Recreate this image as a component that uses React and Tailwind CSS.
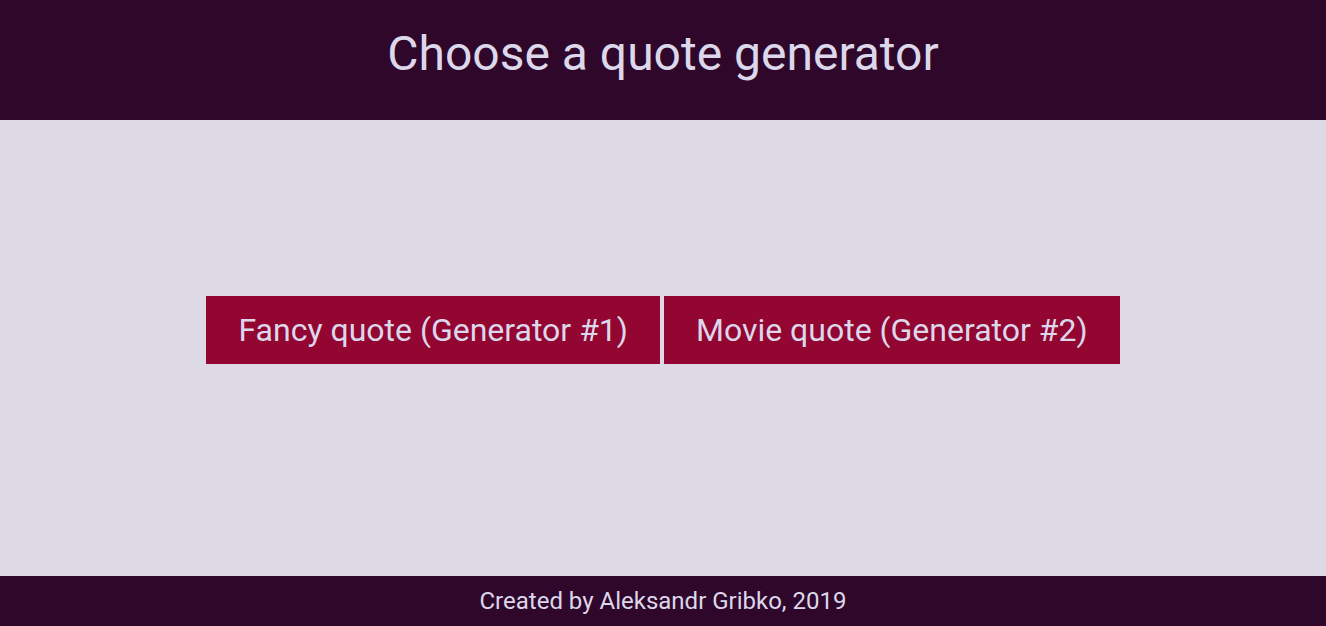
export default function App() {
  return (
    <div className="flex h-[626px] flex-col bg-[#dddae6] font-['Roboto',sans-serif] text-[#dcd7ea]">
      <header className="flex h-[120px] shrink-0 items-center justify-center bg-[#2f072a] pb-[12px]">
        <h1 className="text-[48px] leading-none">Choose a quote generator</h1>
      </header>
      <main className="flex flex-1 items-center justify-center gap-[4px] pb-[36px]">
        <button className="h-[68px] bg-[#920631] px-[32px] text-[32px] leading-none text-[#dcd7ea]">
          Fancy quote (Generator #1)
        </button>
        <button className="h-[68px] bg-[#920631] px-[32px] text-[32px] leading-none text-[#dcd7ea]">
          Movie quote (Generator #2)
        </button>
      </main>
      <footer className="flex h-[50px] shrink-0 items-center justify-center bg-[#2f072a]">
        <p className="text-[24px] leading-none">Created by Aleksandr Gribko, 2019</p>
      </footer>
    </div>
  );
}
